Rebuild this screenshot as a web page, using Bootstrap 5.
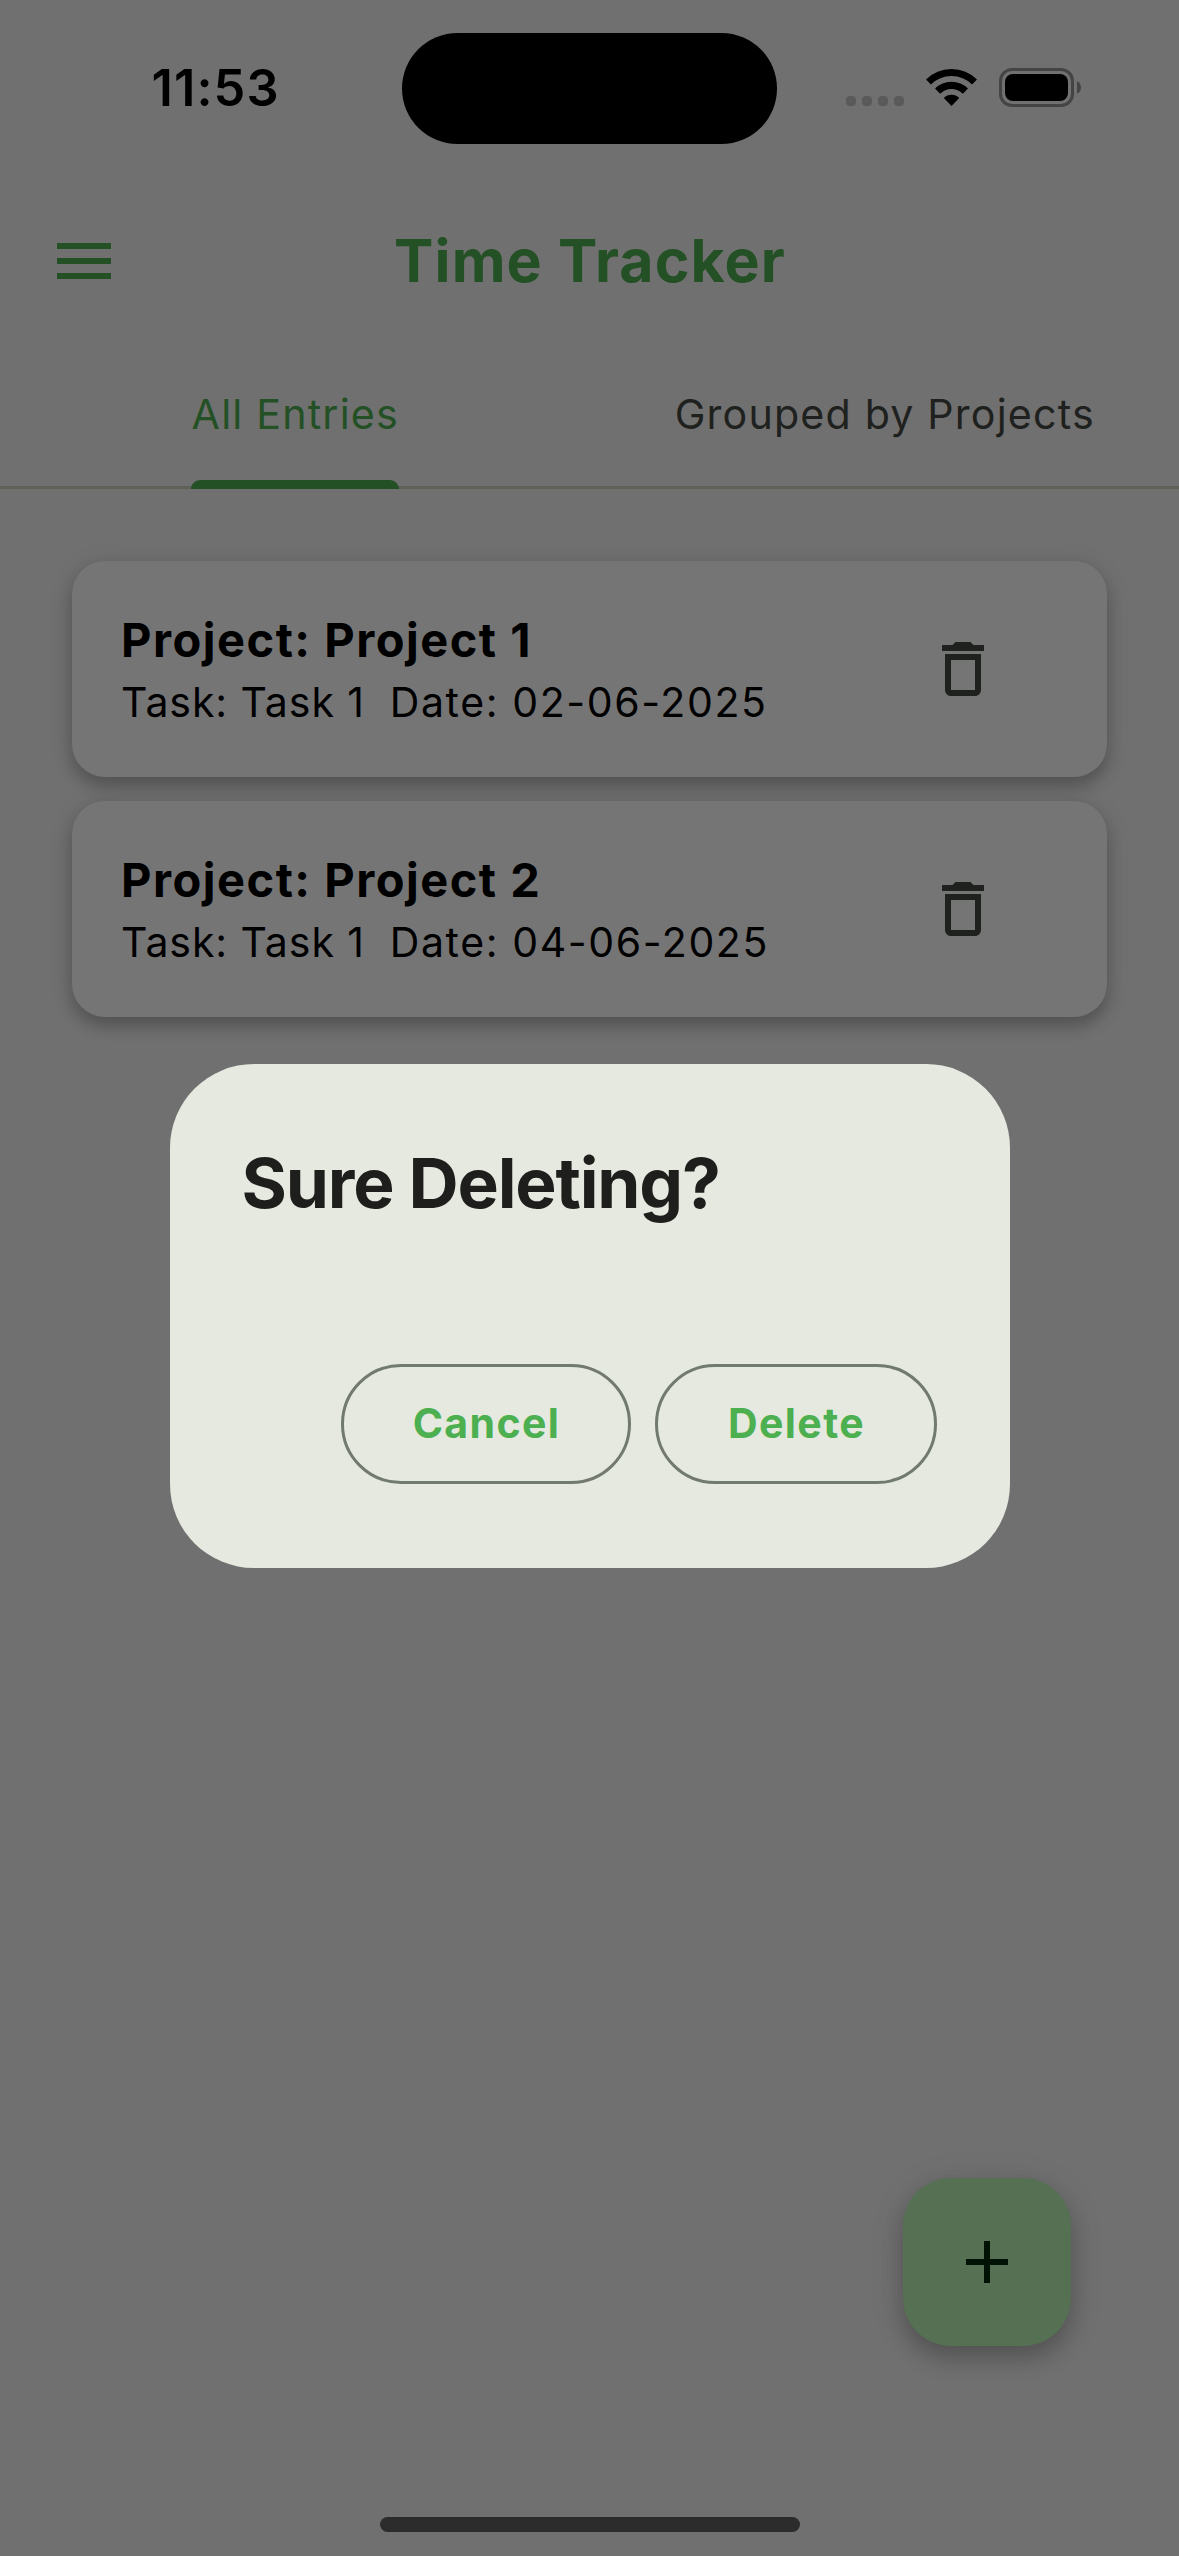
<!DOCTYPE html>
<html lang="en">
<head>
<meta charset="utf-8">
<meta name="viewport" content="width=device-width, initial-scale=1">
<title>Time Tracker</title>
<link rel="stylesheet" href="https://cdn.jsdelivr.net/npm/bootstrap@5.3.0/dist/css/bootstrap.min.css">
<script src="https://cdn.jsdelivr.net/npm/bootstrap@5.3.0/dist/js/bootstrap.bundle.min.js"></script>
<style>
  body { font-family: Inter, "Liberation Sans", sans-serif; background: #707070; color: #000; }
  svg { display: block; flex: none; }
  .screen { height: 2556px; background: #707070; }

  /* status bar */
  .status-bar { height: 176px; padding: 0 97px 0 151.5px; }
  .clock { font-size: 50.5px; line-height: 60px; font-weight: 600; letter-spacing: 1.1px; }
  .island { width: 375px; height: 111px; top: 33px; left: 402px; background: #000; }

  /* app bar */
  .app-bar { height: 169px; padding: 1px 48px 0; color: #235024; }
  .app-title { font-size: 59px; line-height: 72px; font-weight: 700; letter-spacing: 1.1px; padding-left: 1px; }
  .bar-side { width: 72px; }

  /* tabs */
  .tab-bar { height: 144px; box-shadow: inset 0 -3px #5f6058; }
  .tab-bar .nav-link { font-size: 41.2px; line-height: 135px; letter-spacing: 1.17px; color: #1f211e; font-weight: 400; }
  .tab-bar .nav-link.active { color: #235024; }
  .tab-label { display: block; padding: 2px 0 1px 1px; }
  .tab-marker { display: block; height: 9px; margin-top: -3px; border-radius: 9px 9px 0 0; background: #235024; }

  /* entries */
  .entries { padding: 72px 72px 0; gap: 24px; }
  .entry { height: 216px; padding: 3px 108px 0 49px; border-radius: 33px; background: #757575; color: #000;
           box-shadow: 0 9px 15px rgba(0,0,0,.22), 0 3px 27px rgba(0,0,0,.09); }
  .entry-icon { margin-top: -3px; }
  .entry-title { font-size: 47px; line-height: 63px; font-weight: 700; letter-spacing: 1.5px; }
  .entry-meta { font-size: 41px; line-height: 63px; letter-spacing: .92px; }
  .entry-date { letter-spacing: 1.6px; }

  /* floating button */
  .fab { width: 168px; height: 168px; margin-right: 108px; border-radius: 48px; background: #567054;
         box-shadow: 0 12px 21px rgba(0,0,0,.2), 0 6px 36px rgba(0,0,0,.1); }
  .home-bar { width: 420px; height: 15px; margin: 171px auto 24px; background: #2c2c2c; }

  /* confirm dialog */
  .confirm { padding: 177px 0 102px; }
  .confirm .modal-dialog { max-width: 840px; width: 840px; height: 504px; margin: 0; }
  .confirm .modal-content { height: 504px; padding: 72px 72px 84px; border-radius: 84px; background: #e5e9df; }
  .confirm .modal-title { font-size: 69.4px; line-height: 95px; font-weight: 700; letter-spacing: -1.18px; color: #1e1e1c; }
  .confirm-actions { gap: 24px; margin-right: 1px; }
  .btn-pill { height: 120px; padding: 1px 0 0 2px; border: 3px solid #72796e; color: #4caf50; font-size: 41px;
              font-weight: 700; letter-spacing: 1.4px; }
  .btn-cancel { width: 290px; }
  .btn-delete { width: 282px; }
</style>
</head>
<body>
<div class="screen d-flex flex-column overflow-hidden">

  <div class="status-bar d-flex align-items-center justify-content-between position-relative">
    <span class="clock">11:53</span>
    <div class="island position-absolute rounded-pill"></div>
    <svg width="236" height="40" viewBox="0 0 236 40">
      <g fill="#5a5a5a">
        <rect x="0" y="28" width="10" height="10" rx="4"/><rect x="16" y="28" width="10" height="10" rx="4"/>
        <rect x="32" y="28" width="10" height="10" rx="4"/><rect x="48" y="28" width="10" height="10" rx="4"/>
      </g>
      <g fill="none" stroke="#000">
        <path stroke-width="7" d="M82.5 14A32.5 32.5 0 0 1 128.5 14"/>
        <path stroke-width="7.3" d="M91.6 23.1A19.7 19.7 0 0 1 119.4 23.1"/>
      </g>
      <path d="M105.5 38L97.8 29.9A11 11 0 0 1 113.2 29.9Z"/>
      <rect x="154.5" y="1.5" width="72" height="36" rx="11.5" fill="none" stroke="#444" stroke-width="3"/>
      <rect x="159" y="6" width="63" height="27" rx="8"/>
      <path fill="#444" d="M231 13.2C233.6 14.3 235 16.7 235 19.4S233.6 24.5 231 25.6Z"/>
    </svg>
  </div>

  <header class="app-bar d-flex align-items-center">
    <svg width="72" height="72" viewBox="0 0 24 24" fill="currentColor"><path d="M3 18h18v-2H3v2zm0-5h18v-2H3v2zm0-7v2h18V6H3z"/></svg>
    <h1 class="app-title flex-fill text-center m-0">Time Tracker</h1>
    <div class="bar-side"></div>
  </header>

  <nav class="tab-bar nav flex-nowrap">
    <a class="nav-link active p-0 w-50 d-flex justify-content-center" href="#"><span><span class="tab-label">All Entries</span><span class="tab-marker"></span></span></a>
    <a class="nav-link p-0 w-50 d-flex justify-content-center" href="#"><span class="tab-label">Grouped by Projects</span></a>
  </nav>

  <main class="entries d-flex flex-column">
    <div class="entry card border-0 flex-row align-items-center justify-content-between">
      <div>
        <div class="entry-title">Project: Project 1</div>
        <div class="entry-meta">Task: Task 1&nbsp; <span class="entry-date">Date: 02-06-2025</span></div>
      </div>
      <svg class="entry-icon" width="72" height="72" viewBox="0 0 24 24" fill="#1f211e"><path d="M6 19c0 1.1.9 2 2 2h8c1.1 0 2-.9 2-2V7H6v12zM8 9h8v10H8V9zm7.5-5l-1-1h-5l-1 1H5v2h14V4h-3.5z"/></svg>
    </div>
    <div class="entry card border-0 flex-row align-items-center justify-content-between">
      <div>
        <div class="entry-title">Project: Project 2</div>
        <div class="entry-meta">Task: Task 1&nbsp; <span class="entry-date">Date: 04-06-2025</span></div>
      </div>
      <svg class="entry-icon" width="72" height="72" viewBox="0 0 24 24" fill="#1f211e"><path d="M6 19c0 1.1.9 2 2 2h8c1.1 0 2-.9 2-2V7H6v12zM8 9h8v10H8V9zm7.5-5l-1-1h-5l-1 1H5v2h14V4h-3.5z"/></svg>
    </div>
  </main>

  <div class="d-flex justify-content-end mt-auto">
    <div class="fab d-flex align-items-center justify-content-center">
      <svg width="72" height="72" viewBox="0 0 24 24" fill="#001204"><path d="M19 13h-6v6h-2v-6H5v-2h6V5h2v6h6v2z"/></svg>
    </div>
  </div>
  <div class="home-bar rounded-pill flex-shrink-0"></div>
</div>

<div class="modal show d-flex align-items-center justify-content-center confirm" tabindex="-1" role="dialog" aria-label="Sure Deleting?">
  <div class="modal-dialog">
    <div class="modal-content border-0 d-flex flex-column justify-content-between">
      <h2 class="modal-title m-0">Sure Deleting?</h2>
      <div class="confirm-actions d-flex justify-content-end">
        <button type="button" class="btn btn-pill btn-cancel rounded-pill">Cancel</button>
        <button type="button" class="btn btn-pill btn-delete rounded-pill">Delete</button>
      </div>
    </div>
  </div>
</div>
</body>
</html>
